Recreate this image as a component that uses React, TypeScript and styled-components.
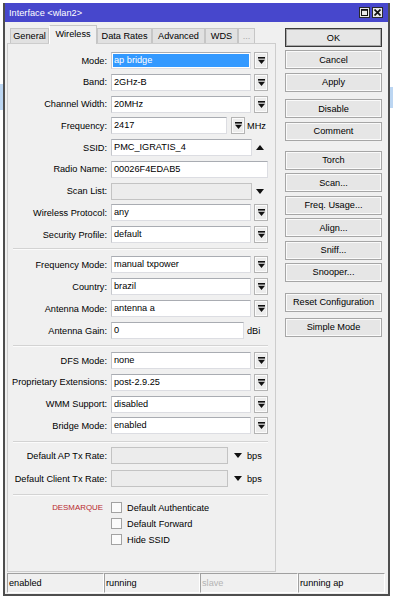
import React from 'react';
import styled, { createGlobalStyle } from 'styled-components';

const Global = createGlobalStyle`
  html, body { margin: 0; padding: 0; background: #ffffff; }
  body {
    font-family: "Liberation Sans", Arial, sans-serif;
    font-size: 9.2px;
    color: #000;
  }
  * { box-sizing: border-box; }
`;

const Desktop = styled.div`
  display: flex;
  width: 393px;
  height: 600px;
  overflow: hidden;
  background: #ffffff;
`;

const BackStrip = styled.div<{ $w: number }>`
  width: ${(p) => p.$w}px;
  flex: none;
  display: flex;
  flex-direction: column;
  background: #ffffff;
`;

const BackBand = styled.div<{ $top: number; $h: number }>`
  margin-top: ${(p) => p.$top}px;
  height: ${(p) => p.$h}px;
  background: #bcd6f2;
`;

const Window = styled.div`
  margin-top: 3px;
  width: 387px;
  height: 593px;
  flex: none;
  display: flex;
  flex-direction: column;
  border: 2px solid #4e4e4e;
  border-top: none;
  background: #f0f0f0;
`;

const TitleBar = styled.div`
  height: 19px;
  flex: none;
  background: #4747cc;
  display: flex;
  align-items: center;
  justify-content: space-between;
  padding: 0 5px 0 4px;
`;

const TitleText = styled.span`
  color: #ffffff;
  font-size: 9.2px;
  white-space: nowrap;
`;

const TitleButtons = styled.div`
  display: flex;
  gap: 2px;
`;

const TitleBtn = styled.div`
  width: 11px;
  height: 11px;
  background: #e8e8e8;
  border: 1px solid #2a2a2a;
  display: flex;
  align-items: center;
  justify-content: center;
`;

const Body = styled.div`
  flex: 1;
  display: flex;
  flex-direction: column;
  padding: 3px 0 1px 2px;
`;

const Main = styled.div`
  height: 547px;
  display: flex;
`;

const LeftCol = styled.div`
  width: 269px;
  flex: none;
  display: flex;
  flex-direction: column;
`;

const TabStrip = styled.div`
  height: 18px;
  flex: none;
  display: flex;
  align-items: flex-end;
  padding-left: 3px;
`;

const Tab = styled.div<{ $w: number; $active?: boolean; $disabled?: boolean }>`
  width: ${(p) => p.$w}px;
  height: ${(p) => (p.$active ? 19 : 15)}px;
  margin-bottom: ${(p) => (p.$active ? -1 : 0)}px;
  position: relative;
  z-index: ${(p) => (p.$active ? 1 : 0)};
  flex: none;
  display: flex;
  align-items: center;
  justify-content: center;
  padding-bottom: ${(p) => (p.$active ? 2 : 0)}px;
  border: 1px solid #c6c6c6;
  border-bottom: none;
  border-left-color: ${(p) => (p.$active ? '#ffffff' : '#c6c6c6')};
  background: ${(p) => (p.$active ? '#f0f0f0' : p.$disabled ? '#e9e9e9' : '#e1e1e1')};
  color: ${(p) => (p.$disabled ? '#a8a8a8' : '#000')};
  white-space: nowrap;
`;

const Panel = styled.div`
  flex: 1;
  border: 1px solid #cdcdcd;
  background: #f0f0f0;
  padding-top: 8px;
  display: flex;
  flex-direction: column;
`;

const Group = styled.div<{ $gap: number }>`
  display: flex;
  flex-direction: column;
  gap: ${(p) => p.$gap}px;
`;

const Separator = styled.div<{ $mt: number; $mb: number }>`
  margin: ${(p) => p.$mt}px 7px ${(p) => p.$mb}px 5px;
  height: 2px;
  border-top: 1px solid #d3d3d3;
  border-bottom: 1px solid #fbfbfb;
`;

const Row = styled.div<{ $h?: number }>`
  height: ${(p) => p.$h ?? 17}px;
  display: flex;
  align-items: center;
`;

const Label = styled.div<{ $red?: boolean }>`
  width: 99px;
  flex: none;
  margin-right: 4px;
  padding-right: ${(p) => (p.$red ? 4 : 0)}px;
  text-align: right;
  white-space: nowrap;
  color: ${(p) => (p.$red ? '#b8282e' : '#000')};
  font-size: ${(p) => (p.$red ? 7.9 : 9.2)}px;
`;

const Field = styled.div`
  width: 157px;
  height: 17px;
  flex: none;
  display: flex;
  align-items: center;
`;

const Input = styled.div<{ $w?: number; $disabled?: boolean; $sel?: boolean }>`
  height: 17px;
  ${(p) => (p.$w ? `width: ${p.$w}px; flex: none;` : 'flex: 1; min-width: 0;')}
  border: 1px solid #adb0b6;
  border-color: ${(p) => (p.$disabled ? '#c3c3c3' : '#a9acb2 #dcdde2 #dcdde2 #c5c7cc')};
  background: ${(p) => (p.$disabled ? '#ececec' : '#ffffff')};
  padding: ${(p) => (p.$sel ? '1px' : '0 2px')};
  line-height: 15px;
  white-space: nowrap;
  overflow: hidden;
`;

const Selected = styled.div`
  height: 13px;
  line-height: 13px;
  background: #3399ff;
  color: #ffffff;
  padding-left: 1px;
`;

const DropBtn = styled.div<{ $ml: number }>`
  width: 14px;
  height: 17px;
  flex: none;
  margin-left: ${(p) => p.$ml}px;
  border: 1px solid #b4b4b4;
  background: #ececec;
  box-shadow: inset 0 0 0 1px #fbfbfb;
  display: flex;
  align-items: center;
  justify-content: center;
`;

const ArrowSlot = styled.div<{ $w: number }>`
  width: ${(p) => p.$w}px;
  height: 17px;
  flex: none;
  display: flex;
  align-items: center;
  justify-content: center;
`;

const Unit = styled.span<{ $ml: number }>`
  margin-left: ${(p) => p.$ml}px;
  white-space: nowrap;
`;

const CheckRow = styled.div`
  height: 11px;
  display: flex;
  align-items: center;
`;

const CheckBox = styled.div`
  width: 11px;
  height: 11px;
  flex: none;
  border: 1px solid #a2a2a2;
  background: #fbfbfb;
  margin-right: 5px;
`;

const Sidebar = styled.div`
  width: 97px;
  flex: none;
  margin-left: 9px;
  padding-top: 3px;
  display: flex;
  flex-direction: column;
  gap: 3.4px;
`;

const Button = styled.div<{ $primary?: boolean; $mt?: number }>`
  height: 19px;
  flex: none;
  margin-top: ${(p) => p.$mt ?? 0}px;
  border: 1px solid ${(p) => (p.$primary ? '#3a3a3a' : '#a6a6a6')};
  box-shadow: inset 0 0 0 1px ${(p) => (p.$primary ? '#a9a9a9' : '#fafafa')};
  background: #e6e6e6;
  display: flex;
  align-items: center;
  justify-content: center;
  white-space: nowrap;
`;

const StatusBar = styled.div`
  height: 20px;
  margin-top: 1px;
  margin-right: 3px;
  display: grid;
  grid-template-columns: 97px 96px 98px 1fr;
`;

const StatusCell = styled.div<{ $dim?: boolean }>`
  border-top: 1px solid #a0a0a0;
  border-left: 1px solid #a0a0a0;
  border-right: 1px solid #ffffff;
  border-bottom: 1px solid #ffffff;
  padding-left: 1px;
  display: flex;
  align-items: center;
  color: ${(p) => (p.$dim ? '#b4b4b4' : '#000')};
  white-space: nowrap;
`;

const BarDown = () => (
  <svg width="7" height="7" viewBox="0 0 7 7">
    <rect x="0" y="0" width="7" height="1.6" fill="#111" />
    <path d="M0 2.8 H7 L3.5 7 Z" fill="#111" />
  </svg>
);

const Tri = ({ up }: { up?: boolean }) => (
  <svg width="8" height="5" viewBox="0 0 8 5">
    <path d={up ? 'M0 5 H8 L4 0 Z' : 'M0 0 H8 L4 5 Z'} fill="#111" />
  </svg>
);

const MaxIcon = () => (
  <svg width="7" height="7" viewBox="0 0 7 7">
    <rect x="0.5" y="0.5" width="6" height="6" fill="none" stroke="#111" strokeWidth="1" />
    <rect x="0" y="0" width="7" height="1.8" fill="#111" />
  </svg>
);

const CloseIcon = () => (
  <svg width="7" height="7" viewBox="0 0 7 7">
    <path d="M0.5 0.5 L6.5 6.5 M6.5 0.5 L0.5 6.5" stroke="#111" strokeWidth="1.7" />
  </svg>
);

const FormRow = ({ label, children }: { label: string; children: React.ReactNode }) => (
  <Row>
    <Label>{label}</Label>
    <Field>{children}</Field>
  </Row>
);

const Select = ({ value, sel }: { value: string; sel?: boolean }) => (
  <>
    <Input $sel={sel}>{sel ? <Selected>{value}</Selected> : value}</Input>
    <DropBtn $ml={3}>
      <BarDown />
    </DropBtn>
  </>
);

export default function App() {
  return (
    <>
      <Global />
      <Desktop>
        <BackStrip $w={3}>
          <BackBand $top={84} $h={26} />
        </BackStrip>
        <Window>
          <TitleBar>
            <TitleText>Interface &lt;wlan2&gt;</TitleText>
            <TitleButtons>
              <TitleBtn>
                <MaxIcon />
              </TitleBtn>
              <TitleBtn>
                <CloseIcon />
              </TitleBtn>
            </TitleButtons>
          </TitleBar>
          <Body>
            <Main>
              <LeftCol>
                <TabStrip>
                  <Tab $w={39}>General</Tab>
                  <Tab $w={48} $active>
                    Wireless
                  </Tab>
                  <Tab $w={55}>Data Rates</Tab>
                  <Tab $w={53}>Advanced</Tab>
                  <Tab $w={33}>WDS</Tab>
                  <Tab $w={17} $disabled>
                    ...
                  </Tab>
                </TabStrip>
                <Panel>
                  <Group $gap={4.75}>
                    <FormRow label="Mode:">
                      <Select value="ap bridge" sel />
                    </FormRow>
                    <FormRow label="Band:">
                      <Select value="2GHz-B" />
                    </FormRow>
                    <FormRow label="Channel Width:">
                      <Select value="20MHz" />
                    </FormRow>
                    <FormRow label="Frequency:">
                      <Input $w={116}>2417</Input>
                      <DropBtn $ml={4}>
                        <BarDown />
                      </DropBtn>
                      <Unit $ml={2}>MHz</Unit>
                    </FormRow>
                    <FormRow label="SSID:">
                      <Input>PMC_IGRATIS_4</Input>
                      <ArrowSlot $w={16}>
                        <Tri up />
                      </ArrowSlot>
                    </FormRow>
                    <FormRow label="Radio Name:">
                      <Input>00026F4EDAB5</Input>
                    </FormRow>
                    <FormRow label="Scan List:">
                      <Input $disabled />
                      <ArrowSlot $w={16}>
                        <Tri />
                      </ArrowSlot>
                    </FormRow>
                    <FormRow label="Wireless Protocol:">
                      <Select value="any" />
                    </FormRow>
                    <FormRow label="Security Profile:">
                      <Select value="default" />
                    </FormRow>
                  </Group>
                  <Separator $mt={5} $mb={6} />
                  <Group $gap={5}>
                    <FormRow label="Frequency Mode:">
                      <Select value="manual txpower" />
                    </FormRow>
                    <FormRow label="Country:">
                      <Select value="brazil" />
                    </FormRow>
                    <FormRow label="Antenna Mode:">
                      <Select value="antenna a" />
                    </FormRow>
                    <FormRow label="Antenna Gain:">
                      <Input $w={133}>0</Input>
                      <Unit $ml={3}>dBi</Unit>
                    </FormRow>
                  </Group>
                  <Separator $mt={6} $mb={5} />
                  <Group $gap={4.75}>
                    <FormRow label="DFS Mode:">
                      <Select value="none" />
                    </FormRow>
                    <FormRow label="Proprietary Extensions:">
                      <Select value="post-2.9.25" />
                    </FormRow>
                    <FormRow label="WMM Support:">
                      <Select value="disabled" />
                    </FormRow>
                    <FormRow label="Bridge Mode:">
                      <Select value="enabled" />
                    </FormRow>
                  </Group>
                  <Separator $mt={7} $mb={4} />
                  <Group $gap={6}>
                    <FormRow label="Default AP Tx Rate:">
                      <Input $w={117} $disabled />
                      <ArrowSlot $w={19}>
                        <Tri />
                      </ArrowSlot>
                      <Unit $ml={0}>bps</Unit>
                    </FormRow>
                    <FormRow label="Default Client Tx Rate:">
                      <Input $w={117} $disabled />
                      <ArrowSlot $w={19}>
                        <Tri />
                      </ArrowSlot>
                      <Unit $ml={0}>bps</Unit>
                    </FormRow>
                  </Group>
                  <Separator $mt={7} $mb={6} />
                  <Group $gap={5}>
                    <CheckRow>
                      <Label $red>DESMARQUE</Label>
                      <CheckBox />
                      <span>Default Authenticate</span>
                    </CheckRow>
                    <CheckRow>
                      <Label />
                      <CheckBox />
                      <span>Default Forward</span>
                    </CheckRow>
                    <CheckRow>
                      <Label />
                      <CheckBox />
                      <span>Hide SSID</span>
                    </CheckRow>
                  </Group>
                </Panel>
              </LeftCol>
              <Sidebar>
                <Button $primary>OK</Button>
                <Button>Cancel</Button>
                <Button>Apply</Button>
                <Button $mt={4.3}>Disable</Button>
                <Button>Comment</Button>
                <Button $mt={6.7}>Torch</Button>
                <Button>Scan...</Button>
                <Button>Freq. Usage...</Button>
                <Button>Align...</Button>
                <Button>Sniff...</Button>
                <Button>Snooper...</Button>
                <Button $mt={7.6}>Reset Configuration</Button>
                <Button $mt={2.6}>Simple Mode</Button>
              </Sidebar>
            </Main>
            <StatusBar>
              <StatusCell>enabled</StatusCell>
              <StatusCell>running</StatusCell>
              <StatusCell $dim>slave</StatusCell>
              <StatusCell>running ap</StatusCell>
            </StatusBar>
          </Body>
        </Window>
        <BackStrip $w={3}>
          <BackBand $top={87} $h={21} />
        </BackStrip>
      </Desktop>
    </>
  );
}
